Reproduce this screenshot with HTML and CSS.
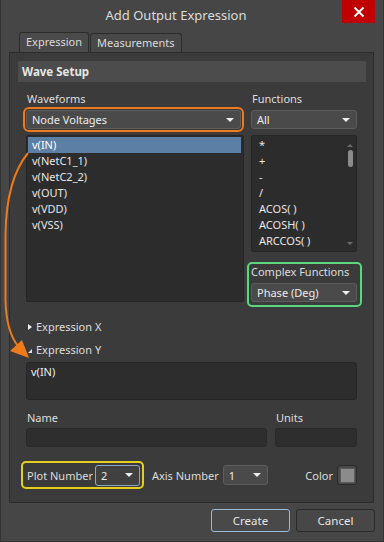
FILE: index.html
```html
<!DOCTYPE html>
<html>
<head>
<meta charset="utf-8">
<link rel="stylesheet" href="styles.css">
</head>
<body>
<div class="window">
  <div class="titlebar">
    <div class="title">Add Output Expression</div>
    <div class="close"><svg width="12" height="12" viewBox="0 0 12 12"><path d="M1.5 1.5 L10.5 10.5 M10.5 1.5 L1.5 10.5" stroke="#fff" stroke-width="1.8"/></svg></div>
  </div>
  <div class="tabs">
    <div class="tab active">Expression</div>
    <div class="tab">Measurements</div>
  </div>
  <div class="panel">
    <div class="section-head">Wave Setup</div>
    <div class="content">
      <div class="cols">
        <div class="col left">
          <div class="label">Waveforms</div>
          <div class="dropdown hl-orange"><span>Node Voltages</span><i class="caret"></i></div>
          <div class="list wave-list">
            <div class="row sel">v(IN)</div>
            <div class="row">v(NetC1_1)</div>
            <div class="row">v(NetC2_2)</div>
            <div class="row">v(OUT)</div>
            <div class="row">v(VDD)</div>
            <div class="row">v(VSS)</div>
          </div>
        </div>
        <div class="col right">
          <div class="label">Functions</div>
          <div class="dropdown"><span>All</span><i class="caret"></i></div>
          <div class="list func-list">
            <div class="items">
              <div class="row">*</div>
              <div class="row">+</div>
              <div class="row">-</div>
              <div class="row">/</div>
              <div class="row">ACOS( )</div>
              <div class="row">ACOSH( )</div>
              <div class="row">ARCCOS( )</div>
            </div>
            <div class="scrollbar">
              <i class="sc-up"></i>
              <i class="thumb"></i>
              <i class="sc-down"></i>
            </div>
          </div>
          <div class="hl-green">
            <div class="label small">Complex Functions</div>
            <div class="dropdown"><span>Phase (Deg)</span><i class="caret"></i></div>
          </div>
        </div>
      </div>
      <div class="expander ex-x"><i class="tri-right"></i>Expression X</div>
      <div class="expander ex-y"><i class="tri-down"></i>Expression Y</div>
      <div class="textarea">v(IN)</div>
      <div class="name-row">
        <div class="field name">
          <div class="label">Name</div>
          <div class="input"></div>
        </div>
        <div class="field units">
          <div class="label">Units</div>
          <div class="input"></div>
        </div>
      </div>
      <div class="bottom-row">
        <div class="hl-yellow">
          <span class="blabel">Plot Number</span>
          <div class="dropdown small-dd focus"><span>2</span><i class="caret"></i></div>
        </div>
        <span class="blabel axis">Axis Number</span>
        <div class="dropdown small-dd"><span>1</span><i class="caret"></i></div>
        <span class="spacer"></span>
        <span class="blabel">Color</span>
        <div class="swatch"><i></i></div>
      </div>
    </div>
  </div>
  <div class="buttons">
    <div class="btn primary">Create</div>
    <div class="btn">Cancel</div>
  </div>
  <svg class="arrow" width="40" height="370" viewBox="0 0 40 370">
    <path d="M28 153 C 14 170, 6 195, 5.5 235 L 5.5 300 C 6 322, 10 336, 18 346" fill="none" stroke="#ee7a1c" stroke-width="2"/>
    <polygon points="10,351 22,340 29,358" fill="#ee7a1c"/>
  </svg>
</div>
</body>
</html>
```

FILE: styles.css
```css
* { box-sizing: border-box; margin: 0; padding: 0; }
html, body { width: 384px; height: 542px; overflow: hidden; background: #464646; }
body {
  font-family: "Noto Sans", "Open Sans", sans-serif;
  font-size: 11px;
  color: #e2e2e2;
}
.window {
  position: relative;
  width: 384px;
  height: 542px;
  background: #464646;
  border: 1px solid #333;
  border-top: none;
}
.titlebar {
  display: flex;
  height: 32px;
  align-items: flex-start;
}
.title {
  flex: 1;
  text-align: center;
  padding-left: 9px;
  font-size: 13px;
  line-height: 31px;
  color: #dcdcdc;
}
.close {
  width: 33px;
  height: 23px;
  margin-right: 8px;
  background: #c00000;
  display: flex;
  align-items: center;
  justify-content: center;
}
.tabs {
  display: flex;
  align-items: flex-end;
  height: 20px;
  margin-left: 8px;
  padding-left: 10px;
  width: 365px;
}
.tab {
  height: 19px;
  padding: 0 6px;
  line-height: 18px;
  font-size: 11px;
  background: #484848;
  border: 1px solid #2c2c2c;
  border-bottom: none;
  border-radius: 3px 3px 0 0;
  color: #dadada;
}
.tab.active { height: 20px; background: #4a4a4a; }
.tab + .tab { margin-left: 1px; }
.panel {
  margin-left: 8px;
  width: 365px;
  height: 451px;
  background: #3b3b3b;
  border: 1px solid #2c2c2c;
  padding: 8px 7px 0 8px;
}
.section-head {
  height: 21px;
  background: #4c4c4c;
  font-weight: bold;
  line-height: 21px;
  padding-left: 4px;
  font-size: 11.5px;
  color: #e6e6e6;
}
.content { padding: 0 9px 0 8px; }
.cols {
  display: grid;
  grid-template-columns: 218px 106px;
  column-gap: 7px;
  margin-top: 10px;
}
.col { display: flex; flex-direction: column; }
.label {
  height: 14px;
  line-height: 14px;
  padding-left: 1px;
  color: #dedede;
  margin-bottom: 4px;
}
.dropdown {
  display: flex;
  align-items: center;
  height: 19px;
  background: #4a4a4a;
  border: 1px solid #5c5c5c;
  border-radius: 3px;
  padding: 0 6px 0 5px;
  color: #ececec;
}
.dropdown span { flex: 1; }
.caret {
  width: 0; height: 0;
  border-left: 4px solid transparent;
  border-right: 4px solid transparent;
  border-top: 4px solid #eee;
}
.hl-orange {
  width: 215px;
  outline: 2px solid #ec7a1e;
  outline-offset: 1px;
  border-radius: 3px;
}
.list {
  margin-top: 6px;
  background: #2c2c2c;
  border: 1px solid #252525;
  border-radius: 2px;
}
.wave-list { height: 167px; padding: 1px; }
.row { height: 16px; line-height: 16px; padding-left: 4px; color: #e6e6e6; }
.wave-list .row.sel { background: #5c7fa5; width: 213px; color: #fff; }
.func-list { height: 117px; display: flex; padding: 1px 0 0 3px; }
.func-list .items { flex: 1; }
.scrollbar {
  width: 12px;
  position: relative;
  display: flex;
  flex-direction: column;
  align-items: center;
  padding-top: 7px;
}
.sc-up, .sc-down {
  width: 0; height: 0;
  border-left: 3px solid transparent;
  border-right: 3px solid transparent;
}
.sc-up { border-bottom: 3px solid #6a6a6a; }
.sc-down { border-top: 3px solid #6a6a6a; margin-top: auto; margin-bottom: 6px; }
.thumb {
  width: 5px; height: 17px; margin-top: 3px;
  background: #8c8c8c; border-radius: 3px;
}
.hl-green {
  margin: 10px -5px 0 -4px;
  border: 2px solid #5cd67f;
  border-radius: 5px;
  padding: 0 3px 3px 2px;
}
.hl-green .label { height: 16px; line-height: 16px; margin-bottom: 3px; padding-left: 0; }
.expander {
  height: 16px;
  line-height: 16px;
  display: flex;
  align-items: center;
  color: #dedede;
  padding-left: 2px;
}
.ex-x { margin-top: 12px; }
.ex-y { margin-top: 7px; }
.tri-right {
  width: 0; height: 0;
  border-top: 3.5px solid transparent;
  border-bottom: 3.5px solid transparent;
  border-left: 4px solid #f0f0f0;
  margin-right: 4px;
}
.tri-down {
  width: 0; height: 0;
  border-left: 4px solid transparent;
  border-bottom: 4px solid #e0e0e0;
  margin-right: 4px;
  margin-top: 2px;
}
.textarea {
  margin-top: 4px;
  height: 38px;
  background: #2d2d2d;
  border: 1px solid #262626;
  border-radius: 3px;
  padding: 2px 0 0 4px;
  line-height: 14px;
  color: #ececec;
}
.name-row { display: flex; gap: 8px; margin-top: 11px; }
.field.name { width: 241px; }
.field.units { width: 82px; }
.field .label { margin-bottom: 3px; }
.input {
  height: 19px;
  background: #2e2e2e;
  border: 1px solid #282828;
  border-radius: 3px;
}
.bottom-row {
  display: flex;
  align-items: center;
  height: 28px;
  margin-top: 14px;
}
.hl-yellow {
  display: flex;
  align-items: center;
  height: 28px;
  margin-left: -5px;
  padding: 0 2px 0 4px;
  border: 2px solid #e5cf1c;
  border-radius: 5px;
}
.blabel { color: #dcdcdc; }
.hl-yellow .blabel { margin-right: 2px; }
.small-dd { width: 45px; height: 20px; padding: 0 6px 0 5px; }
.small-dd.focus { border-color: #8aa7c4; background: #404040; height: 21px; }
.axis { margin: 0 4px 0 8px; }
.spacer { flex: 1; }
.swatch {
  margin-left: 4px;
  width: 20px; height: 20px;
  border: 1px solid #2a2a2a;
  background: #4a4a4a;
  border-radius: 3px;
  display: flex; align-items: center; justify-content: center;
}
.swatch i { width: 15px; height: 15px; background: #8b8b8b; border: 1px solid #5a5a5a; }
.buttons {
  display: flex;
  justify-content: flex-end;
  gap: 6px;
  margin-top: 6px;
  padding-right: 8px;
}
.btn {
  width: 79px;
  height: 23px;
  line-height: 21px;
  text-align: center;
  background: #474747;
  border: 1px solid #2a2a2a;
  border-radius: 3px;
  color: #e6e6e6;
  font-size: 11.5px;
}
.btn.primary { border-color: #9cb9d6; background: #494949; }
.arrow { position: absolute; left: -1px; top: 0; pointer-events: none; }
```
